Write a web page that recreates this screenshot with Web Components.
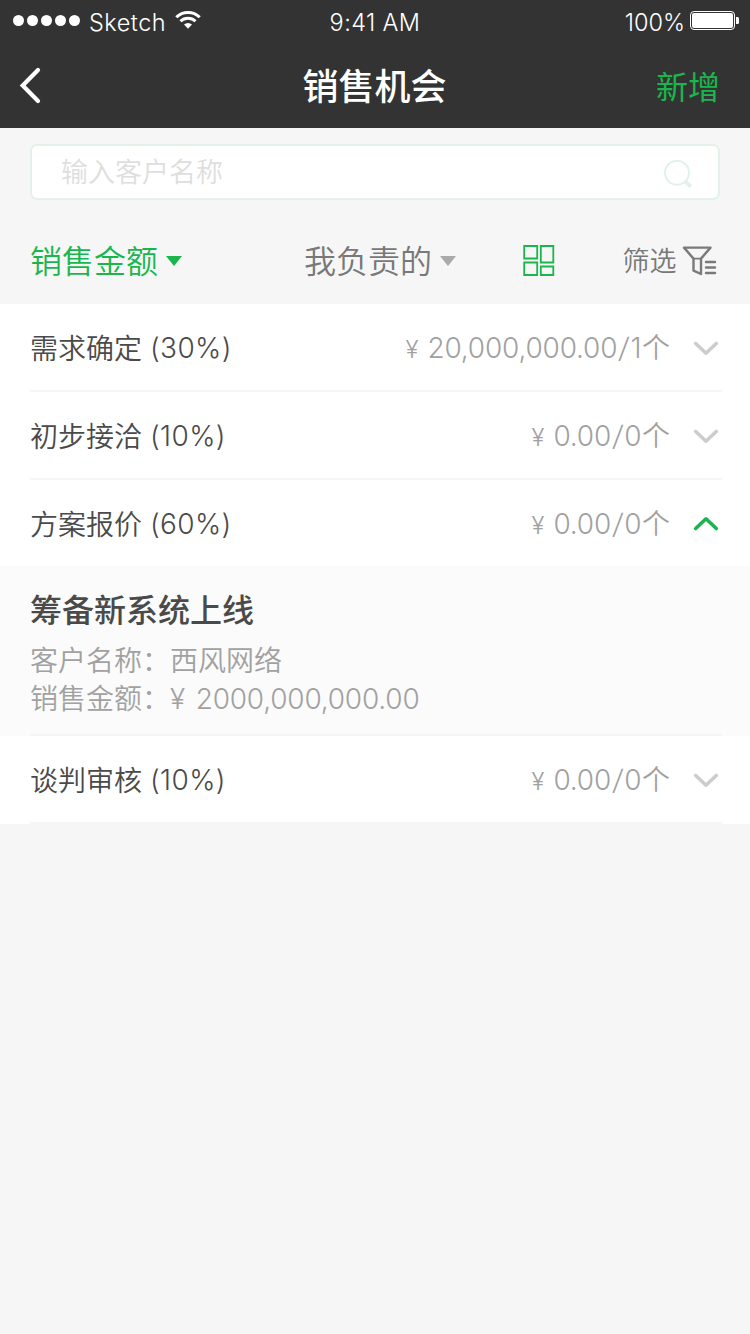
<!DOCTYPE html>
<html lang="zh-CN">
<head>
<meta charset="utf-8">
<title>销售机会</title>
<style>
html,body{margin:0;padding:0;background:#f6f6f6}
body{width:750px;height:1334px;overflow:hidden;font-family:Inter,"Noto Sans CJK SC",sans-serif;color:#4a4a4a}
</style>
</head>
<body>
<crm-app></crm-app>
<script>
function define(name, html){
  const t=document.createElement('template');
  t.innerHTML=html;
  customElements.define(name, class extends HTMLElement{
    constructor(){super();this.attachShadow({mode:'open'}).append(t.content.cloneNode(true));}
  });
}

define('status-bar', `<style>
:host{display:grid;grid-template-columns:1fr auto 1fr;height:40px;align-items:center;color:#fff;font-size:23.5px;line-height:40px;white-space:nowrap;font-weight:350}
div{display:flex;height:40px;align-items:center}
.l{padding-left:13px}
.r{justify-content:flex-end;padding-right:10px}
.t{padding-top:5px;height:35px;line-height:35px}
.car{margin-left:8px;letter-spacing:.5px;width:78px}
.time{letter-spacing:.4px}
svg{display:block;flex:none}
.wifi{margin-left:7px}
.bat{margin-left:5px}
</style>
<div class="l"><svg width="68" height="40" fill="#fff"><circle cx="5.5" cy="20.5" r="5.5"/><circle cx="19.5" cy="20.5" r="5.5"/><circle cx="33.5" cy="20.5" r="5.5"/><circle cx="47.5" cy="20.5" r="5.5"/><circle cx="61.5" cy="20.5" r="5.5"/></svg><span class="t car">Sketch</span>
<svg class="wifi" width="28" height="40" viewBox="174 0 28 40"><g fill="none" stroke="#fff" stroke-width="3"><path d="M176.300 17.200A16.600 16.600 0 0 1 199.700 17.200"/><path d="M180.500 21.300A10.700 10.700 0 0 1 195.500 21.300"/></g><path d="M184 24.600A6 6 0 0 1 192 24.600L188 28.800Z" fill="#fff"/></svg></div>
<div><span class="t time">9:41 AM</span></div>
<div class="r"><span class="t">100%</span><svg class="bat" width="50" height="40" viewBox="690 0 50 40"><rect x="690.500" y="11.500" width="44" height="18" rx="3.500" fill="none" stroke="#fff"/><rect x="692" y="13" width="41" height="15" rx="2" fill="#fff"/><path d="M736 17h1.500q1.500 0 1.500 1.500v4q0 1.500-1.500 1.500H736z" fill="#fff"/></svg></div>`);

define('nav-bar', `<style>
:host{display:grid;grid-template-columns:1fr auto 1fr;height:88px;align-items:center;color:#fff}
.title{font-size:36px;font-weight:500;line-height:52px;padding:5px 1px 0 0}
.act{justify-self:end;padding-right:30px;font-size:32px;line-height:48px;color:#1ab64d;padding-top:8px}
svg{display:block}
</style>
<svg width="60" height="88" viewBox="0 40 60 88"><path d="M38 70L22.700 85.500L38 101" fill="none" stroke="#fff" stroke-width="4.200" stroke-linecap="round"/></svg>
<span class="title"><slot></slot></span><span class="act"><slot name="action"></slot></span>`);

define('search-box', `<style>
:host{display:flex;box-sizing:border-box;height:56px;margin:16px 30px 0;border:2px solid #e2f2e9;border-radius:7px;background:#fff;align-items:center;justify-content:space-between;padding:0 25px 0 29px;font-size:27px;font-weight:350;color:#dedede;line-height:52px}
span{padding-top:2px}
svg{display:block;margin-top:4px}
</style>
<span><slot></slot></span>
<svg width="30" height="30" viewBox="663 159 30 30" fill="none" stroke="#e2f2e9"><circle cx="677" cy="172.800" r="12" stroke-width="2"/><path d="M685.800 182L690.800 186.500" stroke-width="4"/></svg>`);

define('filter-item', `<style>
:host{display:flex;align-items:center;font-size:32px;line-height:48px;font-weight:350;color:#787878;height:104px;white-space:nowrap}
:host([active]){color:#1ab64d}
:host([small]){font-size:27px}
span{padding-top:20px}
svg{display:block;margin:17px 0 0 8px}
path{fill:#aaa}
:host([active]) path{fill:#1ab64d}
:host([small]) svg{display:none}
</style><span><slot></slot></span><svg width="16" height="10"><path d="M0 0H16L8 10Z"/></svg><slot name="icon"></slot>`);

define('filter-bar', `<style>
:host{display:grid;grid-template-columns:274px 219px 99.5px auto;height:104px;padding-left:30px;align-items:center}
svg{display:block}
.grid{margin-top:16px}
.funnel{margin:15px 0 0 5.5px}
</style>
<filter-item active>销售金额</filter-item><filter-item>我负责的</filter-item>
<svg class="grid" width="32" height="32" viewBox="523 244 32 32" fill="none" stroke="#1ab64d" stroke-width="1.800"><path d="M524.200 246h13v12.500h-13zM540.800 246h12.500v16.500h-12.500zM524.200 262.500h13v12.500h-13zM540.800 266.500h12.500v8.500h-12.500z"/></svg>
<filter-item small>筛选<svg slot="icon" class="funnel" width="36" height="32" viewBox="682 244 36 32" fill="none" stroke="#7a7a7a" stroke-width="2.400" stroke-linejoin="round" stroke-linecap="round"><path d="M684 247.600H710.500L701 258.600V274L693.500 270.600V258.600Z"/><path d="M693.500 258.600H701" stroke-width="1.600"/><path d="M706 262H715M706 267.500H715M706 273H715"/></svg></filter-item>`);

define('stage-row', `<style>
:host{display:flex;align-items:center;height:86px;padding:0 30px;border-bottom:2px solid transparent;background:linear-gradient(#f5f5f5,#f5f5f5) 30px 86px/692px 2px no-repeat border-box,#fff;font-size:28px;line-height:42px;white-space:nowrap}
:host([open]){border-bottom:0;background:#fff}
.name{flex:1;font-weight:350;color:#4a4a4a;padding-top:4px}
::slotted(i){font-style:normal;font-weight:300;letter-spacing:.4px;position:relative;top:-1px}
.val{color:#a1a1a1;font-weight:350;margin-right:23px;padding-top:4px}
.num{font-weight:300;margin-right:.5px}
::slotted([slot=value]){letter-spacing:-.18px}
.slash{display:inline-block;transform:skewX(-6deg);margin:0 1.700px}
.yen{font-size:24px;margin-right:1px}
svg{display:block;margin-top:2px}
path{fill:none;stroke:#ccc;stroke-width:3.600;stroke-linecap:round;stroke-linejoin:round}
:host([open]) svg{transform:scaleY(-1)}
:host([open]) path{stroke:#1ab64d}
</style>
<span class="name"><slot></slot> <slot name="rate"></slot></span><span class="val"><span class="num"><span class="yen">¥</span> <slot name="value"></slot><span class="slash">/</span><slot name="count"></slot></span>个</span>
<svg width="27" height="18" viewBox="0 0 27 18"><path d="M2.700 4.500L13 14.200L23.300 4.500"/></svg>`);

define('deal-card', `<style>
:host{display:block;height:168px;padding:0 30px;background:linear-gradient(#f5f5f5,#f5f5f5) 30px 168px/692px 2px no-repeat border-box,#fbfbfb;border-bottom:2px solid transparent;font-size:28px;font-weight:350;line-height:38px;color:#a1a1a1}
h2{margin:0;font-size:32px;font-weight:500;line-height:48px;color:#4a4a4a;padding:21px 0 7px}
.amt{font-weight:300;letter-spacing:-.2px}
.yen{margin-right:3px}
</style><h2><slot></slot></h2><div>客户名称：<slot name="client"></slot></div><div>销售金额：<span class="amt"><span class="yen">¥</span> <slot name="amount"></slot></span></div>`);

define('crm-app', `<style>:host{display:flex;flex-direction:column}header{background:#333}</style>
<header><status-bar></status-bar><nav-bar>销售机会<span slot="action">新增</span></nav-bar></header>
<search-box>输入客户名称</search-box>
<filter-bar></filter-bar>
<stage-row>需求确定<i slot="rate">(30%)</i><span slot="value">20,000,000.00</span><span slot="count">1</span></stage-row>
<stage-row>初步接洽<i slot="rate">(10%)</i><span slot="value">0.00</span><span slot="count">0</span></stage-row>
<stage-row open>方案报价<i slot="rate">(60%)</i><span slot="value">0.00</span><span slot="count">0</span></stage-row>
<deal-card>筹备新系统上线<span slot="client">西风网络</span><span slot="amount">2000,000,000.00</span></deal-card>
<stage-row>谈判审核<i slot="rate">(10%)</i><span slot="value">0.00</span><span slot="count">0</span></stage-row>`);
</script>
</body>
</html>
